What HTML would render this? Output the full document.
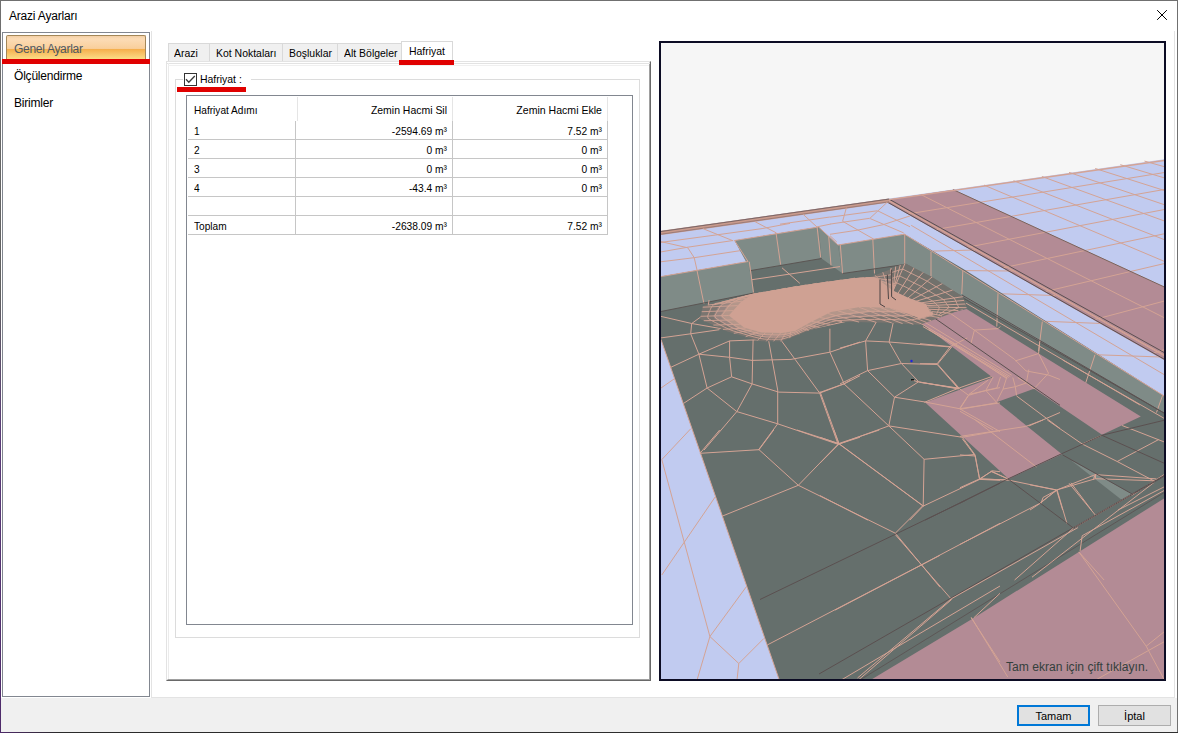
<!DOCTYPE html>
<html><head><meta charset="utf-8">
<style>
*{box-sizing:border-box;margin:0;padding:0}
html,body{width:1178px;height:733px;overflow:hidden;background:#fff;font-family:"Liberation Sans",sans-serif;color:#000}
.a{position:absolute}
.t{position:absolute;white-space:pre;font-size:11px;line-height:13px}
#win{position:absolute;left:0;top:0;width:1178px;height:733px;border:1px solid #707070;background:#fff}
#footer{position:absolute;left:1px;top:698px;width:1176px;height:34px;background:#f0f0f0}
.sx{transform:scaleX(.92);transform-origin:0 0}
.sx5{transform:scaleX(.95);transform-origin:0 0}
.sxr{transform:scaleX(.93);transform-origin:100% 0}
.btn{position:absolute;top:705px;height:21px;width:73px;background:#e1e1e1;border:1px solid #adadad;font-size:11px;text-align:center;line-height:19px}
</style></head><body>
<div id="win"></div>
<div class="a" style="left:0;top:0;width:1px;height:733px;background:linear-gradient(#707070 0%,#606060 40%,#5a3c78 60%,#4e2a6a 100%)"></div>
<div class="a" style="left:0;top:732px;width:1178px;height:1px;background:linear-gradient(90deg,#4e2a6a 0%,#2a2a2a 5%,#303030 100%)"></div>
<!-- title -->
<div class="t" style="left:9px;top:9px;font-size:12px;line-height:15px;letter-spacing:-0.2px">Arazi Ayarları</div>
<svg class="a" style="left:1155px;top:9px" width="13" height="13"><path d="M2.5 1.5L11.5 10.5M11.5 1.5L2.5 10.5" stroke="#000" stroke-width="1" stroke-linecap="square"/></svg>
<!-- container light border -->
<div class="a" style="left:151px;top:31px;width:1024px;height:667px;border-left:1px solid #e3e3e3;border-right:1px solid #e3e3e3;border-bottom:1px solid #e3e3e3"></div>
<!-- left panel -->
<div class="a" style="left:2px;top:32px;width:148px;height:665px;border:1px solid #828790;background:#fff"></div>
<div class="a" style="left:6px;top:35px;width:140px;height:25px;border:1px solid #a48758;border-bottom:none;border-radius:2px 2px 0 0;background:linear-gradient(#f3cfa6 0%,#fcdcb6 12%,#f9cf9b 52%,#f5ad4a 54%,#f8c56a 75%,#fde18c 100%)"></div>
<div class="t" style="left:14px;top:42px;font-size:12px;line-height:15px;color:#4d5762;letter-spacing:-0.3px">Genel Ayarlar</div>
<div class="a" style="left:2px;top:59px;width:148px;height:5px;background:#e00000"></div>
<div class="t" style="left:14px;top:69px;font-size:12px;line-height:15px;letter-spacing:-0.2px">Ölçülendirme</div>
<div class="t" style="left:14px;top:96px;font-size:12px;line-height:15px;letter-spacing:-0.2px">Birimler</div>

<!-- tabs -->
<div class="a" style="left:168px;top:43px;width:42px;height:19px;background:#f0f0f0;border:1px solid #d9d9d9;border-bottom:none"></div>
<div class="a" style="left:209px;top:43px;width:74px;height:19px;background:#f0f0f0;border:1px solid #d9d9d9;border-bottom:none"></div>
<div class="a" style="left:282px;top:43px;width:56px;height:19px;background:#f0f0f0;border:1px solid #d9d9d9;border-bottom:none"></div>
<div class="a" style="left:337px;top:43px;width:65px;height:19px;background:#f0f0f0;border:1px solid #d9d9d9;border-bottom:none"></div>
<!-- tab panel -->
<div class="a" style="left:166px;top:61px;width:485px;height:620px;border-top:1px solid #e3e3e3;border-left:1px solid #e3e3e3;border-right:1px solid #696969;border-bottom:1px solid #696969;background:#fff"></div>
<div class="a" style="left:167px;top:62px;width:483px;height:618px;border-top:1px solid #fff;border-left:1px solid #fff;border-right:1px solid #a0a0a0;border-bottom:1px solid #a0a0a0"></div>
<div class="a" style="left:166px;top:63px;width:484px;height:1px;background:#e3e3e3"></div>
<div class="a" style="left:168px;top:63px;width:1px;height:616px;background:#ebebeb"></div>
<div class="a" style="left:168px;top:65px;width:481px;height:1px;background:#f0f0f0"></div>
<div class="a" style="left:401px;top:41px;width:52px;height:22px;background:#fff;border:1px solid #d9d9d9;border-bottom:none"></div>
<div class="t sx5" style="left:174px;top:47px">Arazi</div>
<div class="t sx5" style="left:216px;top:47px">Kot Noktaları</div>
<div class="t sx5" style="left:289px;top:47px">Boşluklar</div>
<div class="t sx5" style="left:344px;top:47px">Alt Bölgeler</div>
<div class="t sx5" style="left:409px;top:45px">Hafriyat</div>
<div class="a" style="left:399px;top:60px;width:55px;height:5px;background:#e00000"></div>

<!-- group box -->
<div class="a" style="left:175px;top:79px;width:465px;height:559px;border:1px solid #dcdcdc"></div>
<div class="a" style="left:183px;top:72px;width:68px;height:15px;background:#fff"></div>
<div class="a" style="left:184px;top:73px;width:13px;height:13px;border:1px solid #333;background:#fff"></div>
<svg class="a" style="left:184px;top:73px" width="13" height="13"><path d="M2 6.3L4.8 9.2L10.8 3" stroke="#3a3a3a" stroke-width="1.3" fill="none"/></svg>
<div class="t" style="left:200px;top:73px;transform:scaleX(.95);transform-origin:0 0">Hafriyat :</div>
<div class="a" style="left:177px;top:87px;width:69px;height:5px;background:#e00000"></div>

<!-- list view -->
<div class="a" style="left:186px;top:95px;width:447px;height:530px;border:1px solid #828790;background:#fff"></div>

<div class="a" style="left:297px;top:97px;width:1px;height:24px;background:#e5e5e5"></div>
<div class="a" style="left:452px;top:97px;width:1px;height:24px;background:#e5e5e5"></div>
<div class="a" style="left:607px;top:97px;width:1px;height:24px;background:#e5e5e5"></div>
<div class="t sx" style="left:194px;top:104px">Hafriyat Adımı</div>
<div class="t sxr" style="left:347px;width:100px;top:104px;text-align:right;transform:scaleX(.95)">Zemin Hacmi Sil</div>
<div class="t sxr" style="left:502px;width:100px;top:104px;text-align:right;transform:scaleX(.96)">Zemin Hacmi Ekle</div>
<div class="a" style="left:295px;top:121px;width:1px;height:114px;background:#c6c6c6"></div>
<div class="a" style="left:452px;top:121px;width:1px;height:114px;background:#c6c6c6"></div>
<div class="a" style="left:607px;top:121px;width:1px;height:114px;background:#c6c6c6"></div>
<div class="a" style="left:188px;top:139px;width:420px;height:1px;background:#c6c6c6"></div>
<div class="a" style="left:188px;top:158px;width:420px;height:1px;background:#c6c6c6"></div>
<div class="a" style="left:188px;top:177px;width:420px;height:1px;background:#c6c6c6"></div>
<div class="a" style="left:188px;top:196px;width:420px;height:1px;background:#c6c6c6"></div>
<div class="a" style="left:188px;top:215px;width:420px;height:1px;background:#c6c6c6"></div>
<div class="a" style="left:188px;top:234px;width:420px;height:1px;background:#c6c6c6"></div>
<div class="t sx" style="left:194px;top:125px">1</div>
<div class="t sxr" style="left:347px;width:100px;top:125px;text-align:right">-2594.69 m³</div>
<div class="t sxr" style="left:502px;width:100px;top:125px;text-align:right">7.52 m³</div>
<div class="t sx" style="left:194px;top:144px">2</div>
<div class="t sxr" style="left:347px;width:100px;top:144px;text-align:right">0 m³</div>
<div class="t sxr" style="left:502px;width:100px;top:144px;text-align:right">0 m³</div>
<div class="t sx" style="left:194px;top:163px">3</div>
<div class="t sxr" style="left:347px;width:100px;top:163px;text-align:right">0 m³</div>
<div class="t sxr" style="left:502px;width:100px;top:163px;text-align:right">0 m³</div>
<div class="t sx" style="left:194px;top:182px">4</div>
<div class="t sxr" style="left:347px;width:100px;top:182px;text-align:right">-43.4 m³</div>
<div class="t sxr" style="left:502px;width:100px;top:182px;text-align:right">0 m³</div>
<div class="t sx" style="left:194px;top:220px">Toplam</div>
<div class="t sxr" style="left:347px;width:100px;top:220px;text-align:right">-2638.09 m³</div>
<div class="t sxr" style="left:502px;width:100px;top:220px;text-align:right">7.52 m³</div>
<!-- 3D viewport -->
<div class="a" style="left:659px;top:41px;width:507px;height:640px;border:2px solid #0c0c24;background:#f6f6f6;overflow:hidden">
<svg id="v3d" width="503" height="636" viewBox="661 43 503 636" style="display:block">
<polygon points="661,231 1170,158.5 1170,684 661,684" fill="#c1cbf0" />
<polygon points="883.2,200.2 953.2,189.7 2132.6,733.4 2080.2,881.2" fill="#b38b95" />
<g><polyline points="887.3,199.6 2083.8,871.3" fill="none" stroke="#d4a394" stroke-width="1.0" /><polyline points="921.0,194.6 2110.2,796.6" fill="none" stroke="#d4a394" stroke-width="1.0" /><polyline points="953.2,189.7 2132.6,733.4" fill="none" stroke="#d4a394" stroke-width="1.0" /><polyline points="984.0,185.1 2151.8,679.1" fill="none" stroke="#d4a394" stroke-width="1.0" /><polyline points="1013.5,180.7 2168.5,632.1" fill="none" stroke="#d4a394" stroke-width="1.0" /><polyline points="1041.9,176.5 2183.0,591.0" fill="none" stroke="#d4a394" stroke-width="1.0" /><polyline points="1069.1,172.4 2195.9,554.7" fill="none" stroke="#d4a394" stroke-width="1.0" /><polyline points="1095.2,168.5 2207.3,522.4" fill="none" stroke="#d4a394" stroke-width="1.0" /><polyline points="1120.3,164.7 2217.6,493.5" fill="none" stroke="#d4a394" stroke-width="1.0" /><polyline points="1144.5,161.1 2226.8,467.5" fill="none" stroke="#d4a394" stroke-width="1.0" /><polyline points="1167.8,157.6 2235.1,443.9" fill="none" stroke="#d4a394" stroke-width="1.0" /><polyline points="1190.2,154.2 2242.7,422.5" fill="none" stroke="#d4a394" stroke-width="1.0" /><polyline points="1211.9,151.0 2249.6,403.0" fill="none" stroke="#d4a394" stroke-width="1.0" /><polyline points="1232.7,147.8 2256.0,385.1" fill="none" stroke="#d4a394" stroke-width="1.0" /><polyline points="1252.9,144.8 2261.8,368.6" fill="none" stroke="#d4a394" stroke-width="1.0" /><polyline points="1272.4,141.9 2267.2,353.4" fill="none" stroke="#d4a394" stroke-width="1.0" /><polyline points="1291.2,139.1 2272.2,339.3" fill="none" stroke="#d4a394" stroke-width="1.0" /><polyline points="1309.4,136.3 2276.8,326.2" fill="none" stroke="#d4a394" stroke-width="1.0" /><polyline points="1327.0,133.7 2281.1,314.0" fill="none" stroke="#d4a394" stroke-width="1.0" /><polyline points="1344.1,131.1 2285.2,302.6" fill="none" stroke="#d4a394" stroke-width="1.0" /><polyline points="911.2,225.3 2070.2,909.5" fill="none" stroke="#d4a394" stroke-width="1.0" /><polyline points="908.2,213.9 1428.3,129.9" fill="none" stroke="#d4a394" stroke-width="1.0" /><polyline points="935.7,229.6 1467.5,136.3" fill="none" stroke="#d4a394" stroke-width="1.0" /><polyline points="967.1,247.3 1510.1,143.3" fill="none" stroke="#d4a394" stroke-width="1.0" /><polyline points="1003.1,267.8 1556.6,151.0" fill="none" stroke="#d4a394" stroke-width="1.0" /><polyline points="1045.0,291.6 1607.4,159.4" fill="none" stroke="#d4a394" stroke-width="1.0" /><polyline points="1094.4,319.6 1663.4,168.6" fill="none" stroke="#d4a394" stroke-width="1.0" /><polyline points="1153.3,353.0 1725.2,178.8" fill="none" stroke="#d4a394" stroke-width="1.0" /><polyline points="1224.8,393.6 1793.9,190.1" fill="none" stroke="#d4a394" stroke-width="1.0" /><polyline points="1313.6,444.0 1870.7,202.7" fill="none" stroke="#d4a394" stroke-width="1.0" /><polyline points="1426.7,508.2 1957.1,216.9" fill="none" stroke="#d4a394" stroke-width="1.0" /><polyline points="1575.6,592.8 2054.9,233.0" fill="none" stroke="#d4a394" stroke-width="1.0" /><polyline points="1780.6,709.1 2166.8,251.4" fill="none" stroke="#d4a394" stroke-width="1.0" /><polyline points="932.6,251.1 975,250" fill="none" stroke="#d4a394" stroke-width="1.0" /><polyline points="962.7,270.6 1013,271" fill="none" stroke="#d4a394" stroke-width="1.0" /><polyline points="998.2,293.7 1055,295.5" fill="none" stroke="#d4a394" stroke-width="1.0" /><polyline points="1042.5,321.2 1102,323.5" fill="none" stroke="#d4a394" stroke-width="1.0" /><polyline points="1095,354.7 1161,357" fill="none" stroke="#d4a394" stroke-width="1.0" /></g>
<polyline points="886.6,199.7 2083.2,872.9" fill="none" stroke="#d4a394" stroke-width="1.0" />
<polyline points="889.4,199.3 2085.5,866.4" fill="none" stroke="#5b4f50" stroke-width="1.0" />
<polyline points="883.9,200.1 2080.8,879.5" fill="none" stroke="#5b4f50" stroke-width="1.0" />
<polyline points="953.2,189.7 2132.6,733.4" fill="none" stroke="#6a5a5a" stroke-width="0.9" />
<polyline points="889,199.6 1170,159.6" fill="none" stroke="#d4a394" stroke-width="1.4" />
<polyline points="661,232.9 889,200.5" fill="none" stroke="#c99a8c" stroke-width="4.2" />
<polyline points="661,231.5 889,199.1" fill="none" stroke="#7a6666" stroke-width="1.0" />
<polyline points="661,234.2 889,201.8" fill="none" stroke="#8f7372" stroke-width="0.8" />
<g><polyline points="660.0,242.5 715.7,235.0 762.1,228.6 790.0,223.4" fill="none" stroke="#d4a394" stroke-width="1.0" /><polyline points="660.0,252.1 687.8,247.2 733.1,240.5" fill="none" stroke="#d4a394" stroke-width="1.0" /><polyline points="660.0,261.9 694.8,257.6 740.0,250.7" fill="none" stroke="#d4a394" stroke-width="1.0" /><polyline points="660.0,241.4 687.8,247.8 694.2,257.6 697.1,270.4 699.4,280.0" fill="none" stroke="#d4a394" stroke-width="1.0" /><polyline points="702.9,228.6 733.1,240.8" fill="none" stroke="#d4a394" stroke-width="1.0" /><polyline points="755.1,221.7 776.0,232.7 780.6,264.6 790.0,273.9" fill="none" stroke="#d4a394" stroke-width="1.0" /><polyline points="780.0,224.2 829.9,217.0" fill="none" stroke="#d4a394" stroke-width="1.0" /><polyline points="803.2,214.4 817.1,227.1" fill="none" stroke="#d4a394" stroke-width="1.0" /><polyline points="817.2,226.8 830.5,224.1" fill="none" stroke="#d4a394" stroke-width="1.0" /><polyline points="846.4,207.7 842.6,221.3 873.7,239.1" fill="none" stroke="#d4a394" stroke-width="1.0" /><polyline points="830.0,217.2 877.1,210.8" fill="none" stroke="#d4a394" stroke-width="1.0" /><polyline points="887.3,202.2 869.6,218.6" fill="none" stroke="#d4a394" stroke-width="1.0" /><polyline points="830.0,224.1 869.6,218.3" fill="none" stroke="#d4a394" stroke-width="1.0" /><polyline points="877.7,210.8 910.0,226.8" fill="none" stroke="#d4a394" stroke-width="1.0" /><polyline points="870.2,218.6 903.7,232.9" fill="none" stroke="#d4a394" stroke-width="1.0" /><polyline points="830.0,234.3 857.3,230.2 883.2,224.7 910.0,215.9" fill="none" stroke="#d4a394" stroke-width="1.0" /><polyline points="830.0,235.7 836.8,242.0" fill="none" stroke="#d4a394" stroke-width="1.0" /></g>
<polygon points="661,276.6 748,261.5 734.6,240.5 818.6,227 838,245 904.5,234.2 965,270 1170,399.7 1170,684 661,684" fill="#656f6c" />
<polygon points="661,276.6 748,261.5 754,293 661,311.5" fill="#7f8b87" />
<polygon points="734.6,240.5 748,261.5 754,293 751,270.5" fill="#7f8b87" />
<polygon points="734.6,240.5 818.6,227 821.6,258.5 751,270.5" fill="#7f8b87" />
<polygon points="818.6,227 838,245 842.6,273.5 821.6,258.5" fill="#7f8b87" />
<polygon points="838,245 904.5,234.2 904.5,264.5 842.6,273.5" fill="#7f8b87" />
<polygon points="904.5,234.2 1170,399.7 1170,416.5 904.5,262.8" fill="#7f8b87" />
<g><polyline points="661,276.6 748,261.5 734.6,240.5 818.6,227 838,245 904.5,234.2 1170,399.7" fill="none" stroke="#d4a394" stroke-width="1.0" /><polyline points="697.1,271 704,304" fill="none" stroke="#d4a394" stroke-width="1.0" /><polyline points="749.3,261.7 753.5,293" fill="none" stroke="#d4a394" stroke-width="1.0" /><polyline points="776,232.7 780.6,264.6" fill="none" stroke="#d4a394" stroke-width="1.0" /><polyline points="817.1,227.1 820.6,257.3" fill="none" stroke="#d4a394" stroke-width="1.0" /><polyline points="828.7,236.4 831,265.4" fill="none" stroke="#d4a394" stroke-width="1.0" /><polyline points="840.3,244.5 842.6,273.5" fill="none" stroke="#d4a394" stroke-width="1.0" /><polyline points="872.8,238.7 874.5,273.5" fill="none" stroke="#d4a394" stroke-width="1.0" /><polyline points="904.7,234 904.7,265.4" fill="none" stroke="#d4a394" stroke-width="1.0" /><polyline points="931,251.6 931,290" fill="none" stroke="#d4a394" stroke-width="1.0" /><polyline points="962.8,271 961.8,294" fill="none" stroke="#d4a394" stroke-width="1.0" /><polyline points="998,293.3 996.8,326.5" fill="none" stroke="#d4a394" stroke-width="1.0" /><polyline points="1042.3,321.6 1038.6,351" fill="none" stroke="#d4a394" stroke-width="1.0" /><polyline points="1095,354.7 1085,385" fill="none" stroke="#d4a394" stroke-width="1.0" /><polyline points="1162.6,395.3 1156.5,412.5" fill="none" stroke="#d4a394" stroke-width="1.0" /><polyline points="661,311.5 754,293" fill="none" stroke="#5b5553" stroke-width="1.0" /><polyline points="751,270.5 821.6,258.5" fill="none" stroke="#5b5553" stroke-width="1.0" /><polyline points="842.6,273.5 904.5,264.5 1170,416.5" fill="none" stroke="#5b5553" stroke-width="1.0" /></g>
<polygon points="661,339.5 780.7,684 661,684" fill="#c1cbf0" />
<polyline points="661,339.5 780.7,684" fill="none" stroke="#d4a394" stroke-width="1.0" />
<polygon points="864,684 973.7,617.9 1078.8,552 1170,494.7 1170,684" fill="#b38b95" />
<polygon points="918.8,321.5 933,317 966.6,309.1 1140.8,416.6 1102,434.7 1034,388.8 997.2,401.9 1061.9,454.3 1008.7,478.9 925.2,402.4 992.6,377.5" fill="#b38b95" />
<polygon points="1071.3,460.4 1095.3,473.5 1132.4,494.2 1121.5,499.7" fill="#7f8b87" />
<g><polyline points="661.0,316.4 691.7,323.5 721.4,328.7" fill="none" stroke="#d4a394" stroke-width="1.0" /><polyline points="691.7,323.5 690.7,333.8 698.9,354.2 707.1,388.0 736.8,411.6 777.7,423.8 838.1,444.3 860.0,437.2" fill="none" stroke="#d4a394" stroke-width="1.0" /><polyline points="661.0,337.9 690.7,333.8 719.4,329.7" fill="none" stroke="#d4a394" stroke-width="1.0" /><polyline points="670.2,367.6 698.9,354.2 729.6,340.9 755.2,339.9 780.8,339.9 803.3,330.7 860.0,318.4" fill="none" stroke="#d4a394" stroke-width="1.0" /><polyline points="698.9,354.2 729.6,357.3 752.1,360.4 791.0,359.4 829.9,352.2 860.0,342.0" fill="none" stroke="#d4a394" stroke-width="1.0" /><polyline points="729.6,357.3 731.6,376.8 752.1,383.9 778.7,392.1 819.7,393.1 844.2,383.9 860.0,375.7" fill="none" stroke="#d4a394" stroke-width="1.0" /><polyline points="731.6,376.8 707.1,388.0 683.5,403.4" fill="none" stroke="#d4a394" stroke-width="1.0" /><polyline points="753.1,339.9 752.1,383.9 736.8,411.6 704.0,450.1" fill="none" stroke="#d4a394" stroke-width="1.0" /><polyline points="768.5,339.9 777.7,390.1 777.7,423.8 758.3,450.1" fill="none" stroke="#d4a394" stroke-width="1.0" /><polyline points="780.8,339.9 795.1,359.4 819.7,393.1 838.1,444.3" fill="none" stroke="#d4a394" stroke-width="1.0" /><polyline points="829.9,328.7 829.9,352.2 844.2,383.9" fill="none" stroke="#d4a394" stroke-width="1.0" /><polyline points="729.6,340.9 729.6,357.3" fill="none" stroke="#d4a394" stroke-width="1.0" /><polyline points="709.1,300.0 707.1,312.3 691.7,323.5" fill="none" stroke="#d4a394" stroke-width="1.0" /><polyline points="707.1,312.3 721.4,306.1" fill="none" stroke="#d4a394" stroke-width="1.0" /><polyline points="840.0,348.1 865.6,340.9 889.1,342.0 951.6,347.1" fill="none" stroke="#d4a394" stroke-width="1.0" /><polyline points="865.6,340.9 878.9,317.4" fill="none" stroke="#d4a394" stroke-width="1.0" /><polyline points="889.1,342.0 893.2,322.5 895.3,316.4" fill="none" stroke="#d4a394" stroke-width="1.0" /><polyline points="889.1,342.0 901.4,363.5 918.8,381.9 958.7,389.0" fill="none" stroke="#d4a394" stroke-width="1.0" /><polyline points="840.0,383.9 867.6,370.6 901.4,363.5 937.2,364.5 951.6,347.1" fill="none" stroke="#d4a394" stroke-width="1.0" /><polyline points="865.6,340.9 867.6,370.6" fill="none" stroke="#d4a394" stroke-width="1.0" /><polyline points="937.2,364.5 958.7,389.0" fill="none" stroke="#d4a394" stroke-width="1.0" /><polyline points="752,279.7 840,266.6" fill="none" stroke="#d4a394" stroke-width="1.0" /><polyline points="782,267.8 799.8,283.3" fill="none" stroke="#d4a394" stroke-width="1.0" /><polyline points="920.0,319.3 1011.7,375.2" fill="none" stroke="#d4a394" stroke-width="1.0" /><polyline points="920.0,322.9 1010.3,376.6" fill="none" stroke="#d4a394" stroke-width="1.0" /><polyline points="922.9,326.5 1008.8,377.4" fill="none" stroke="#d4a394" stroke-width="1.0" /><polyline points="928.6,329.4 1007.4,378.1" fill="none" stroke="#d4a394" stroke-width="1.0" /><polyline points="938.6,333.7 1006.0,378.1" fill="none" stroke="#d4a394" stroke-width="1.0" /><polyline points="948.7,312.2 974.4,330.1 1014.6,359.4 1026.0,370.9 1049.0,375.2 1060.0,379.5" fill="none" stroke="#d4a394" stroke-width="1.0" /><polyline points="974.4,330.1 970.9,343.7" fill="none" stroke="#d4a394" stroke-width="1.0" /><polyline points="974.4,330.1 998.1,328.6 1000.2,326.5" fill="none" stroke="#d4a394" stroke-width="1.0" /><polyline points="920.0,343.7 950.1,346.6 937.2,363.7 920.0,363.7" fill="none" stroke="#d4a394" stroke-width="1.0" /><polyline points="937.2,363.7 958.7,388.1 991.6,376.6" fill="none" stroke="#d4a394" stroke-width="1.0" /><polyline points="920.0,382.4 958.7,388.1 924.3,402.4" fill="none" stroke="#d4a394" stroke-width="1.0" /><polyline points="950.1,346.6 967.3,338.0" fill="none" stroke="#d4a394" stroke-width="1.0" /><polyline points="1015.3,360.9 1038.6,353.5 1039.9,340" fill="none" stroke="#d4a394" stroke-width="1.0" /><polyline points="1038.6,353.5 1048.5,373.2 1033.7,389.1" fill="none" stroke="#d4a394" stroke-width="1.0" /><polyline points="1028.8,369.5 1026.3,383" fill="none" stroke="#d4a394" stroke-width="1.0" /><polyline points="993.2,376.9 985.8,390.4 968.6,395.3 960,389.1" fill="none" stroke="#d4a394" stroke-width="1.0" /><polyline points="1000.5,376.9 996.9,387.9 985.8,390.4" fill="none" stroke="#d4a394" stroke-width="1.0" /><polyline points="1006.7,377.5 1003,389.1 996.9,401.3" fill="none" stroke="#d4a394" stroke-width="1.0" /><polyline points="1012.8,377.5 1015.3,386.7 1016.5,395.3" fill="none" stroke="#d4a394" stroke-width="1.0" /><polyline points="1017.7,377.5 1026.3,383 1033.7,388.5" fill="none" stroke="#d4a394" stroke-width="1.0" /><polyline points="968.6,395.3 960,408.8" fill="none" stroke="#d4a394" stroke-width="1.0" /><polyline points="985.8,390.4 996.9,402.7 960,409.4" fill="none" stroke="#d4a394" stroke-width="1.0" /><polyline points="960,411.3 993.2,430" fill="none" stroke="#d4a394" stroke-width="1.0" /><polyline points="1016.5,395.9 1060,428.5" fill="none" stroke="#d4a394" stroke-width="1.0" /><polyline points="1028.8,426 1060,412.5" fill="none" stroke="#d4a394" stroke-width="1.0" /><polyline points="1003,389.1 1015.3,386.7 1026.3,383" fill="none" stroke="#d4a394" stroke-width="1.0" /><polyline points="934.3,317.9 1060.0,405.3" fill="none" stroke="#5b5050" stroke-width="1.0" /><polyline points="966.1,303.2 1140,405" fill="none" stroke="#d4a394" stroke-width="1.0" /><polyline points="962,295 1170,416.5" fill="none" stroke="#5b5050" stroke-width="1.0" /><polyline points="700.0,453.3 759.0,449.7 773.7,430.0" fill="none" stroke="#d4a394" stroke-width="1.0" /><polyline points="759.0,449.7 798.3,485.3 838.8,443.5 833.9,430.0" fill="none" stroke="#d4a394" stroke-width="1.0" /><polyline points="838.8,443.5 797.0,430.0" fill="none" stroke="#d4a394" stroke-width="1.0" /><polyline points="838.8,443.5 879.3,430.0" fill="none" stroke="#d4a394" stroke-width="1.0" /><polyline points="838.8,443.5 923.5,506.1" fill="none" stroke="#d4a394" stroke-width="1.0" /><polyline points="722.6,516.0 798.3,485.3 895.3,533.2 923.3,505.2" fill="none" stroke="#d4a394" stroke-width="1.0" /><polyline points="895.3,533.2 940.0,587.2" fill="none" stroke="#d4a394" stroke-width="1.0" /><polyline points="835.1,610.1 940.0,555.3" fill="none" stroke="#d4a394" stroke-width="1.0" /><polyline points="700.0,453.3 719.7,430.0" fill="none" stroke="#d4a394" stroke-width="1.0" /><polyline points="820.0,392.4 843.9,383.8 850.6,380.0" fill="none" stroke="#d4a394" stroke-width="1.0" /><polyline points="843.9,383.8 888.8,425.9 924.1,459.3 923.2,506.1 909.8,520.1" fill="none" stroke="#d4a394" stroke-width="1.0" /><polyline points="820.0,391.5 839.1,444.0 820.0,463.1" fill="none" stroke="#d4a394" stroke-width="1.0" /><polyline points="820.0,437.3 839.1,444.0 888.8,425.9" fill="none" stroke="#d4a394" stroke-width="1.0" /><polyline points="839.1,444.0 923.2,506.1" fill="none" stroke="#d4a394" stroke-width="1.0" /><polyline points="820.0,495.6 867.8,520.1" fill="none" stroke="#d4a394" stroke-width="1.0" /><polyline points="888.8,425.9 894.5,397.2" fill="none" stroke="#d4a394" stroke-width="1.0" /><polyline points="894.5,397.2 918.4,381.9 911.7,380.0" fill="none" stroke="#d4a394" stroke-width="1.0" /><polyline points="918.4,381.9 959.5,388.6" fill="none" stroke="#d4a394" stroke-width="1.0" /><polyline points="894.5,397.2 925.1,402.0" fill="none" stroke="#d4a394" stroke-width="1.0" /><polyline points="888.8,425.9 962.4,437.3" fill="none" stroke="#d4a394" stroke-width="1.0" /><polyline points="924.1,459.3 974.8,454.5 979.6,479.4 923.2,506.1" fill="none" stroke="#d4a394" stroke-width="1.0" /><polyline points="974.8,454.5 962.4,437.3" fill="none" stroke="#d4a394" stroke-width="1.0" /><polyline points="979.6,479.4 992.0,470.8 1000.0,471.7" fill="none" stroke="#d4a394" stroke-width="1.0" /><polyline points="979.6,479.4 1000.0,480.3" fill="none" stroke="#d4a394" stroke-width="1.0" /><polyline points="951.9,380.0 959.5,388.6" fill="none" stroke="#d4a394" stroke-width="1.0" /><polyline points="925.1,402.0 959.5,408.7 1000.0,402.9" fill="none" stroke="#d4a394" stroke-width="1.0" /><polyline points="959.5,408.7 969.1,394.3 988.2,380.0" fill="none" stroke="#d4a394" stroke-width="1.0" /><polyline points="969.1,394.3 1000.0,387.6" fill="none" stroke="#d4a394" stroke-width="1.0" /><polyline points="959.5,408.7 1000.0,431.6" fill="none" stroke="#d4a394" stroke-width="1.0" /><polyline points="962.4,437.3 1000.0,430.6" fill="none" stroke="#d4a394" stroke-width="1.0" /><polyline points="925.1,520.1 1000.0,483.2" fill="none" stroke="#5b5050" stroke-width="1.0" /><polyline points="1122.1,425.5 1164.1,441.9" fill="none" stroke="#d4a394" stroke-width="1.0" /><polyline points="1030.0,484.8 1056.6,490.0 1095.5,478.7 1154.8,480.8" fill="none" stroke="#d4a394" stroke-width="1.0" /><polyline points="1056.6,490.0 1062.7,510.0" fill="none" stroke="#d4a394" stroke-width="1.0" /><polyline points="1056.6,490.0 1040.2,503.3 1030.0,510.0" fill="none" stroke="#d4a394" stroke-width="1.0" /><polyline points="1070.9,482.8 1091.4,510.0" fill="none" stroke="#d4a394" stroke-width="1.0" /><polyline points="1095.5,473.6 1095.5,478.7" fill="none" stroke="#d4a394" stroke-width="1.0" /><polyline points="1132.3,495.1 1164.1,474.6" fill="none" stroke="#d4a394" stroke-width="1.0" /><polyline points="1118.0,510.0 1164.1,486.9" fill="none" stroke="#d4a394" stroke-width="1.0" /><polyline points="1062.7,360.0 1164.1,418.3" fill="none" stroke="#d4a394" stroke-width="1.0" /><polyline points="860,680 1165,492" fill="none" stroke="#5b5050" stroke-width="0.8" /><polyline points="895.1,534.4 951.6,599.5" fill="none" stroke="#d4a394" stroke-width="1.0" /><polyline points="767.4,644.9 920.9,565.1 1000.0,523.3" fill="none" stroke="#d4a394" stroke-width="1.0" /><polyline points="841.1,680.1 1000.0,586.0" fill="none" stroke="#d4a394" stroke-width="1.0" /><polyline points="858.3,680.1 951.6,599.5" fill="none" stroke="#d4a394" stroke-width="1.0" /><polyline points="973.7,617.9 1000.0,593.3" fill="none" stroke="#d4a394" stroke-width="1.0" /><polyline points="971.3,617.9 1000.0,662.1" fill="none" stroke="#d4a394" stroke-width="1.0" /><polyline points="760.0,599.5 895.1,534.4 966.3,500.0" fill="none" stroke="#5b5050" stroke-width="1.0" /><polyline points="819,674 1165,475" fill="none" stroke="#5b5050" stroke-width="1.0" /><polyline points="857.5,678 951.3,598.8 1077.9,527.6" fill="none" stroke="#d4a394" stroke-width="1.0" /><polyline points="960.0,544.4 1038.6,504.0 1057.1,489.9 1095.3,474.6 1156.5,478.9" fill="none" stroke="#d4a394" stroke-width="1.0" /><polyline points="1057.1,489.9 1043.0,497.5 1040.8,504.0" fill="none" stroke="#d4a394" stroke-width="1.0" /><polyline points="1057.1,489.9 1067.0,523.7" fill="none" stroke="#d4a394" stroke-width="1.0" /><polyline points="1069.1,483.3 1095.3,515.0" fill="none" stroke="#d4a394" stroke-width="1.0" /><polyline points="1095.3,474.6 1093.2,480.0" fill="none" stroke="#d4a394" stroke-width="1.0" /><polyline points="1014.6,580.0 1073.5,528.1 1134.6,493.1" fill="none" stroke="#d4a394" stroke-width="1.0" /><polyline points="1032.0,577.2 1154.3,482.2" fill="none" stroke="#d4a394" stroke-width="1.0" /><polyline points="1080.1,551.0 1082.2,535.7 1165.2,489.9" fill="none" stroke="#d4a394" stroke-width="1.0" /><polyline points="1079.0,552.1 1104.1,580.0" fill="none" stroke="#d4a394" stroke-width="1.0" /><polyline points="962.2,438.6 975.3,456.0 979.6,478.9" fill="none" stroke="#d4a394" stroke-width="1.0" /><polyline points="960.0,454.9 975.3,456.0" fill="none" stroke="#d4a394" stroke-width="1.0" /><polyline points="960.0,487.7 979.6,478.9 1008.0,480.0" fill="none" stroke="#d4a394" stroke-width="1.0" /><polyline points="979.6,478.9 991.7,471.3 1008.0,478.9" fill="none" stroke="#d4a394" stroke-width="1.0" /><polyline points="960.0,436.4 1025.5,426.5 1043.0,420.0" fill="none" stroke="#d4a394" stroke-width="1.0" /><polyline points="975.3,420.0 1036.4,466.9" fill="none" stroke="#d4a394" stroke-width="1.0" /><polyline points="979.6,478.9 1008.0,480.0 1056.0,489.9" fill="none" stroke="#d4a394" stroke-width="1.0" /><polyline points="990.6,471.3 1008.0,478.9" fill="none" stroke="#d4a394" stroke-width="1.0" /><polyline points="1047.3,420.0 1082.2,444.0 1117.2,461.5 1154.3,481.1" fill="none" stroke="#d4a394" stroke-width="1.0" /><polyline points="1082.2,444.0 1101.9,435.3" fill="none" stroke="#d4a394" stroke-width="1.0" /><polyline points="1117.2,461.5 1158.6,439.6" fill="none" stroke="#d4a394" stroke-width="1.0" /><polyline points="960.0,503.0 1008.0,478.9 1061.5,453.8 1101.9,435.3 1165.2,420.0" fill="none" stroke="#5b5050" stroke-width="1.0" /><polyline points="1008.0,478.9 1073.5,528.1" fill="none" stroke="#5b5050" stroke-width="1.0" /><polyline points="1073.5,528.1 1165.2,475.7" fill="none" stroke="#5b5050" stroke-width="1.0" /><polyline points="1101.9,435.3 1165.2,463.7" fill="none" stroke="#5b5050" stroke-width="1.0" /><polyline points="1062.6,454.9 1132.5,494.2" fill="none" stroke="#5b5050" stroke-width="1.0" /><polyline points="971.2,617.3 1007.7,676.9" fill="none" stroke="#d4a394" stroke-width="1.0" /><polyline points="1078.8,551.9 1146.2,646.2 1165.4,681.9" fill="none" stroke="#d4a394" stroke-width="1.0" /><polyline points="1146.2,646.2 1165.4,630.8 1170.0,626.9" fill="none" stroke="#d4a394" stroke-width="1.0" /><polyline points="1092.3,681.9 1170.0,638.5" fill="none" stroke="#d4a394" stroke-width="1.0" /><polyline points="661,388 674.3,378.8" fill="none" stroke="#d4a394" stroke-width="1.0" /><polyline points="867.6,370.6 894.5,397.2" fill="none" stroke="#d4a394" stroke-width="1.0" /><polyline points="661.8,459.6 690.7,428.8" fill="none" stroke="#d4a394" stroke-width="1.0" /><polyline points="746.5,586.5 709.9,636.5" fill="none" stroke="#d4a394" stroke-width="1.0" /><polyline points="661.8,459.6 709.9,636.5 738.8,663.5 736.8,681.9" fill="none" stroke="#d4a394" stroke-width="1.0" /><polyline points="661.8,575.0 715.7,496.2" fill="none" stroke="#d4a394" stroke-width="1.0" /><polyline points="738.8,663.5 763.8,638.5" fill="none" stroke="#d4a394" stroke-width="1.0" /><polyline points="696.5,681.9 709.9,636.5" fill="none" stroke="#d4a394" stroke-width="1.0" /></g>
<polygon points="700,319 703,306 722,302 744,297 765,293.5 800,288 840,281.5 870,277 892.8,268.4 905,263.5 932,277 962.8,296.7 966.5,307.7 933.3,320 919.8,324.7 889,322.7 840,321.7 809,330.4 781.9,341.3 761.4,341.3 727.3,331.4" fill="#7a7570" />
<polygon points="713.3,315.9 714.6,313.6 715.9,311.2 717.2,308.8 718.5,306.5 720.5,304.5 723.3,303.3 726.1,302.2 728.8,301.2 731.6,300.1 734.4,299.1 737.4,298.0 740.6,297.3 743.8,296.7 747.0,296.0 750.2,295.4 753.4,294.7 757.4,294.0 761.9,293.2 766.4,292.5 770.9,291.7 775.4,290.9 780.3,290.1 785.9,289.2 791.5,288.3 797.2,287.5 802.8,286.6 808.4,285.7 814.9,284.8 821.8,283.7 828.8,282.7 835.7,281.7 842.6,280.7 849.0,279.8 853.4,279.4 857.7,279.0 862.0,278.6 866.2,278.3 870.5,277.9 874.6,278.2 878.1,278.4 881.6,278.6 885.1,278.8 888.6,279.0 892.2,279.0 895.2,278.9 897.7,279.1 900.2,279.2 902.7,279.4 905.1,279.5 907.7,279.5 911.4,280.9 915.4,282.7 919.5,284.5 923.5,286.4 927.0,288.3 930.1,290.4 933.4,293.2 936.8,295.9 940.2,298.6 943.5,301.3 945.6,303.6 946.7,305.6 946.2,307.1 945.6,308.5 945.1,310.0 944.3,310.9 943.3,311.4 940.1,311.9 935.6,312.5 931.1,313.0 926.6,313.6 922.2,314.5 917.8,315.4 915.1,315.6 912.6,315.7 910.1,315.9 906.8,316.2 903.1,316.6 899.1,316.9 893.7,316.6 888.3,316.4 883.0,316.2 877.6,316.4 872.3,316.6 866.0,316.9 858.9,317.2 851.8,317.5 845.1,318.2 838.6,319.0 832.1,319.8 826.9,321.4 822.1,323.1 817.5,324.8 813.4,326.3 809.2,327.8 805.1,329.3 801.3,331.0 797.5,332.7 793.8,334.0 790.2,335.2 786.5,336.4 783.0,337.3 779.9,337.5 776.7,337.6 773.0,337.5 769.4,337.5 765.7,337.4 761.2,336.8 756.3,335.8 751.5,334.5 746.8,333.1 742.1,331.7 737.3,330.4 733.2,328.8 729.2,326.9 725.3,324.7 721.5,322.5 717.6,320.4 714.3,318.2" fill="#978580" />
<polygon points="720.3,315.7 722.1,313.3 723.8,310.9 725.5,308.5 727.2,306.1 729.3,303.9 731.8,302.3 734.3,301.1 736.7,299.9 739.2,298.6 741.7,297.4 744.3,296.2 747.1,295.6 750.0,295.1 752.8,294.5 755.7,294.0 758.5,293.5 762.7,292.7 767.6,291.8 772.6,291.0 777.5,290.1 782.5,289.2 787.6,288.3 793.0,287.5 798.3,286.7 803.6,285.9 809.0,285.1 814.3,284.3 820.8,283.3 827.6,282.4 834.5,281.4 841.4,280.5 848.2,279.5 854.4,278.8 858.2,278.6 861.9,278.5 865.6,278.3 869.4,278.2 873.1,278.0 876.7,279.0 879.9,280.2 883.2,281.3 886.4,282.4 889.7,283.5 892.9,284.4 895.9,285.0 898.6,285.7 901.3,286.4 904.0,287.1 906.7,287.8 909.5,288.4 913.0,289.6 916.6,291.1 920.2,292.6 923.8,294.1 926.7,295.8 928.8,297.8 931.1,300.1 933.3,302.4 935.5,304.7 937.8,307.0 938.0,308.7 937.7,310.2 936.5,311.4 935.2,312.6 934.0,313.8 932.4,314.2 930.6,313.8 927.5,313.5 923.7,313.2 920.0,312.9 916.2,312.6 912.5,312.8 908.9,312.9 906.2,312.7 903.6,312.5 901.0,312.3 897.2,312.3 892.8,312.5 888.1,312.5 882.8,312.3 877.4,312.2 872.1,312.1 866.8,312.6 861.4,313.2 855.6,313.7 849.3,314.3 843.0,314.9 837.4,316.1 832.0,317.4 826.6,318.8 822.0,320.5 817.5,322.4 813.4,324.2 809.9,325.6 806.5,327.1 803.1,328.6 799.8,330.2 796.6,331.8 793.5,332.8 790.4,333.6 787.3,334.4 784.3,335.1 781.5,335.3 778.4,335.5 774.7,335.4 771.0,335.3 767.3,335.3 763.2,334.9 758.8,334.3 754.7,333.2 750.7,332.0 746.7,330.9 742.6,329.7 738.9,328.4 735.4,326.7 732.0,324.5 728.6,322.3 725.2,320.2 722.1,318.0" fill="#b4968a" />
<g><polyline points="728.8,315.5 700.6,316.3" fill="none" stroke="#cfa193" stroke-width="0.9" /><polyline points="733.2,310.6 701.7,311.7" fill="none" stroke="#cfa193" stroke-width="0.9" /><polyline points="737.7,305.6 702.7,307.2" fill="none" stroke="#cfa193" stroke-width="0.9" /><polyline points="742.0,301.2 707.9,305.0" fill="none" stroke="#cfa193" stroke-width="0.9" /><polyline points="746.2,298.3 714.6,303.6" fill="none" stroke="#cfa193" stroke-width="0.9" /><polyline points="750.4,295.3 721.2,302.2" fill="none" stroke="#cfa193" stroke-width="0.9" /><polyline points="754.9,293.6 728.8,300.4" fill="none" stroke="#cfa193" stroke-width="0.9" /><polyline points="759.8,292.8 736.5,298.7" fill="none" stroke="#cfa193" stroke-width="0.9" /><polyline points="764.6,291.9 744.2,297.0" fill="none" stroke="#cfa193" stroke-width="0.9" /><polyline points="774.5,290.2 751.6,295.7" fill="none" stroke="#cfa193" stroke-width="0.9" /><polyline points="785.5,288.2 758.9,294.5" fill="none" stroke="#cfa193" stroke-width="0.9" /><polyline points="796.4,286.3 767.1,293.2" fill="none" stroke="#cfa193" stroke-width="0.9" /><polyline points="806.4,284.8 779.4,291.2" fill="none" stroke="#cfa193" stroke-width="0.9" /><polyline points="816.4,283.3 791.6,289.3" fill="none" stroke="#cfa193" stroke-width="0.9" /><polyline points="827.8,281.7 804.4,287.3" fill="none" stroke="#cfa193" stroke-width="0.9" /><polyline points="841.4,279.9 818.4,285.0" fill="none" stroke="#cfa193" stroke-width="0.9" /><polyline points="855.0,278.1 832.4,282.7" fill="none" stroke="#cfa193" stroke-width="0.9" /><polyline points="863.9,277.7 844.8,280.8" fill="none" stroke="#cfa193" stroke-width="0.9" /><polyline points="870.1,277.9 855.3,279.2" fill="none" stroke="#cfa193" stroke-width="0.9" /><polyline points="876.2,278.2 865.8,277.6" fill="none" stroke="#cfa193" stroke-width="0.9" /><polyline points="882.1,282.3 874.8,275.2" fill="none" stroke="#cfa193" stroke-width="0.9" /><polyline points="888.0,286.8 882.8,272.2" fill="none" stroke="#cfa193" stroke-width="0.9" /><polyline points="893.9,291.0 890.7,269.2" fill="none" stroke="#cfa193" stroke-width="0.9" /><polyline points="899.7,293.7 896.0,267.1" fill="none" stroke="#cfa193" stroke-width="0.9" /><polyline points="905.6,296.4 900.2,265.4" fill="none" stroke="#cfa193" stroke-width="0.9" /><polyline points="911.7,298.9 904.5,263.7" fill="none" stroke="#cfa193" stroke-width="0.9" /><polyline points="918.0,301.2 913.4,267.7" fill="none" stroke="#cfa193" stroke-width="0.9" /><polyline points="924.3,303.4 922.8,272.4" fill="none" stroke="#cfa193" stroke-width="0.9" /><polyline points="927.3,306.6 932.3,277.2" fill="none" stroke="#cfa193" stroke-width="0.9" /><polyline points="929.1,310.3 943.1,284.1" fill="none" stroke="#cfa193" stroke-width="0.9" /><polyline points="930.9,313.9 953.9,291.0" fill="none" stroke="#cfa193" stroke-width="0.9" /><polyline points="926.8,315.7 963.0,297.4" fill="none" stroke="#cfa193" stroke-width="0.9" /><polyline points="922.8,317.5 964.3,301.2" fill="none" stroke="#cfa193" stroke-width="0.9" /><polyline points="918.2,318.1 965.6,305.1" fill="none" stroke="#cfa193" stroke-width="0.9" /><polyline points="912.4,315.3 962.8,309.1" fill="none" stroke="#cfa193" stroke-width="0.9" /><polyline points="906.5,312.6 951.2,313.4" fill="none" stroke="#cfa193" stroke-width="0.9" /><polyline points="900.9,310.7 939.6,317.7" fill="none" stroke="#cfa193" stroke-width="0.9" /><polyline points="895.5,309.3 931.1,320.8" fill="none" stroke="#cfa193" stroke-width="0.9" /><polyline points="890.1,307.9 926.4,322.4" fill="none" stroke="#cfa193" stroke-width="0.9" /><polyline points="880.4,307.5 921.7,324.0" fill="none" stroke="#cfa193" stroke-width="0.9" /><polyline points="869.7,307.2 913.3,324.3" fill="none" stroke="#cfa193" stroke-width="0.9" /><polyline points="859.0,307.2 902.6,323.6" fill="none" stroke="#cfa193" stroke-width="0.9" /><polyline points="848.4,309.0 891.8,322.9" fill="none" stroke="#cfa193" stroke-width="0.9" /><polyline points="837.8,310.8 876.3,322.4" fill="none" stroke="#cfa193" stroke-width="0.9" /><polyline points="828.1,313.5 859.1,322.1" fill="none" stroke="#cfa193" stroke-width="0.9" /><polyline points="820.0,317.5 842.0,321.7" fill="none" stroke="#cfa193" stroke-width="0.9" /><polyline points="812.0,321.5 830.4,324.4" fill="none" stroke="#cfa193" stroke-width="0.9" /><polyline points="805.8,324.9 819.5,327.4" fill="none" stroke="#cfa193" stroke-width="0.9" /><polyline points="800.6,327.8 808.7,330.5" fill="none" stroke="#cfa193" stroke-width="0.9" /><polyline points="795.5,330.7 799.2,334.3" fill="none" stroke="#cfa193" stroke-width="0.9" /><polyline points="790.6,331.7 789.8,338.1" fill="none" stroke="#cfa193" stroke-width="0.9" /><polyline points="785.8,332.4 780.7,341.3" fill="none" stroke="#cfa193" stroke-width="0.9" /><polyline points="780.5,333.0 773.5,341.3" fill="none" stroke="#cfa193" stroke-width="0.9" /><polyline points="773.1,332.8 766.3,341.3" fill="none" stroke="#cfa193" stroke-width="0.9" /><polyline points="765.6,332.6 757.6,340.2" fill="none" stroke="#cfa193" stroke-width="0.9" /><polyline points="758.6,331.7 745.7,336.7" fill="none" stroke="#cfa193" stroke-width="0.9" /><polyline points="752.2,329.8 733.8,333.3" fill="none" stroke="#cfa193" stroke-width="0.9" /><polyline points="745.8,328.0 722.9,329.4" fill="none" stroke="#cfa193" stroke-width="0.9" /><polyline points="739.9,324.3 713.4,325.1" fill="none" stroke="#cfa193" stroke-width="0.9" /><polyline points="734.4,319.9 703.8,320.7" fill="none" stroke="#cfa193" stroke-width="0.9" /><polygon points="721.8,315.7 723.6,313.3 725.3,310.8 727.1,308.4 728.9,306.0 731.1,303.8 733.5,302.1 735.9,300.9 738.3,299.6 740.7,298.3 743.1,297.0 745.6,295.8 748.4,295.3 751.2,294.8 754.0,294.2 756.7,293.7 759.5,293.2 763.7,292.5 768.8,291.6 773.8,290.7 778.9,289.8 783.9,288.9 789.1,288.0 794.4,287.2 799.7,286.4 804.9,285.6 810.2,284.8 815.5,284.0 821.9,283.1 828.8,282.1 835.6,281.2 842.5,280.2 849.4,279.3 855.5,278.6 859.1,278.4 862.8,278.3 866.4,278.2 870.0,278.1 873.6,278.0 877.1,279.2 880.3,280.5 883.5,281.8 886.7,283.2 889.9,284.5 893.1,285.5 896.1,286.3 898.8,287.1 901.5,287.9 904.3,288.7 907.0,289.5 909.9,290.1 913.3,291.4 916.8,292.8 920.4,294.2 923.9,295.6 926.7,297.3 928.6,299.3 930.6,301.5 932.6,303.7 934.6,305.9 936.6,308.2 936.5,309.7 935.9,311.1 934.5,312.3 933.1,313.4 931.8,314.6 930.1,314.8 928.0,314.3 925.0,313.8 921.4,313.3 917.7,312.8 914.1,312.4 910.6,312.4 907.1,312.4 904.4,312.2 901.8,311.9 899.2,311.6 895.3,311.5 890.7,311.6 886.0,311.7 880.6,311.5 875.3,311.3 869.9,311.3 864.6,311.9 859.2,312.5 853.5,313.1 847.4,313.7 841.3,314.4 835.8,315.6 830.7,317.1 825.5,318.6 821.0,320.4 816.6,322.2 812.5,324.0 809.2,325.5 805.9,327.0 802.7,328.5 799.5,330.1 796.4,331.6 793.4,332.5 790.4,333.3 787.4,334.0 784.5,334.6 781.8,334.9 778.8,335.0 775.1,335.0 771.4,334.9 767.7,334.8 763.6,334.5 759.3,334.0 755.4,332.9 751.5,331.8 747.6,330.7 743.7,329.6 740.0,328.4 736.6,326.7 733.3,324.5 730.0,322.3 726.7,320.1 723.7,317.9" fill="none" stroke="#cfa193" stroke-width="0.9"/><polygon points="714.7,315.9 716.1,313.5 717.5,311.1 718.8,308.8 720.2,306.4 722.3,304.4 725.0,303.1 727.7,302.0 730.4,300.9 733.1,299.8 735.8,298.7 738.7,297.6 741.9,297.0 745.0,296.4 748.1,295.7 751.3,295.1 754.4,294.5 758.4,293.8 763.0,293.0 767.6,292.2 772.2,291.4 776.8,290.6 781.8,289.7 787.3,288.9 792.9,288.0 798.5,287.1 804.0,286.3 809.6,285.4 816.1,284.5 823.0,283.5 829.9,282.5 836.8,281.4 843.7,280.4 850.1,279.6 854.4,279.2 858.5,278.9 862.7,278.6 866.9,278.2 871.0,277.9 875.0,278.4 878.5,278.7 881.9,279.1 885.4,279.5 888.8,279.9 892.3,280.1 895.3,280.2 897.9,280.4 900.4,280.7 902.9,280.9 905.5,281.2 908.1,281.3 911.7,282.7 915.7,284.4 919.6,286.2 923.5,287.9 927.0,289.8 929.8,291.9 933.0,294.5 936.1,297.2 939.2,299.8 942.4,302.4 944.1,304.6 944.9,306.5 944.2,307.9 943.5,309.4 942.8,310.8 941.9,311.6 940.8,311.8 937.6,312.2 933.3,312.6 928.9,313.0 924.5,313.4 920.3,314.2 916.0,314.9 913.3,315.0 910.8,315.1 908.3,315.2 904.9,315.4 901.0,315.8 896.9,316.0 891.5,315.8 886.2,315.5 880.8,315.4 875.4,315.7 870.1,315.9 864.0,316.3 857.0,316.6 850.1,317.0 843.6,317.8 837.3,318.7 831.0,319.6 825.9,321.2 821.2,323.0 816.7,324.7 812.7,326.2 808.7,327.6 804.7,329.2 801.0,330.8 797.4,332.5 793.8,333.8 790.2,334.9 786.6,336.0 783.2,336.9 780.3,337.0 777.0,337.1 773.4,337.1 769.7,337.0 766.0,337.0 761.6,336.4 756.8,335.5 752.1,334.2 747.6,332.9 743.0,331.6 738.4,330.2 734.3,328.7 730.4,326.9 726.7,324.7 722.9,322.5 719.1,320.3 715.8,318.1" fill="none" stroke="#cfa193" stroke-width="0.9"/><polygon points="707.7,316.1 708.6,313.8 709.6,311.4 710.5,309.1 711.5,306.8 713.4,305.0 716.5,304.0 719.5,303.1 722.5,302.2 725.5,301.3 728.5,300.5 731.9,299.5 735.4,298.7 738.8,298.0 742.3,297.2 745.8,296.5 749.3,295.7 753.2,295.1 757.3,294.4 761.4,293.6 765.6,292.9 769.7,292.2 774.4,291.4 780.3,290.5 786.1,289.6 792.0,288.7 797.8,287.8 803.7,286.9 810.2,285.9 817.2,284.8 824.1,283.7 831.1,282.7 838.1,281.6 844.8,280.6 849.6,280.0 854.3,279.4 859.0,278.9 863.7,278.3 868.4,277.8 872.9,277.5 876.6,277.0 880.4,276.4 884.1,275.8 887.8,275.3 891.5,274.6 894.6,274.1 896.9,273.8 899.2,273.5 901.6,273.2 903.9,272.9 906.3,272.5 910.2,274.0 914.5,276.1 918.9,278.1 923.2,280.2 927.3,282.3 931.1,284.6 935.3,287.6 939.6,290.6 943.9,293.7 948.1,296.7 951.7,299.5 954.0,301.9 954.0,303.6 953.9,305.3 953.9,306.9 953.8,308.3 953.5,309.4 950.2,310.6 945.1,311.9 940.1,313.2 935.0,314.5 929.9,315.9 924.9,317.4 922.2,317.9 919.8,318.3 917.3,318.8 914.5,319.3 911.4,319.9 907.8,320.3 902.4,320.0 897.0,319.7 891.7,319.5 886.3,319.4 880.9,319.4 874.4,319.4 866.6,319.5 858.9,319.6 851.4,319.9 843.9,320.3 836.5,320.7 830.9,322.0 825.8,323.7 820.8,325.3 816.1,326.8 811.4,328.3 806.7,329.8 802.5,331.6 798.3,333.4 794.1,335.0 790.0,336.5 785.8,338.0 782.0,339.1 778.7,339.2 775.3,339.2 771.6,339.2 768.0,339.2 764.4,339.1 759.6,338.3 754.2,337.0 748.9,335.5 743.7,333.9 738.4,332.4 733.1,330.9 728.6,329.1 724.3,327.1 720.0,324.9 715.7,322.7 711.5,320.5 708.0,318.3" fill="none" stroke="#cfa193" stroke-width="0.9"/></g>
<polygon points="891,268 905,263.5 932,277 962.8,296.7 966.5,307.7 942,316 934,314 928,307 920,303 908,298 893,291 893,291" fill="#72716c" />
<g><polyline points="893.0,291.0 891.0,268.0" fill="none" stroke="#cfa193" stroke-width="1.0" /><polyline points="893.0,291.0 895.7,266.5" fill="none" stroke="#cfa193" stroke-width="1.0" /><polyline points="893.0,291.0 900.3,265.0" fill="none" stroke="#cfa193" stroke-width="1.0" /><polyline points="893.0,291.0 905.0,263.5" fill="none" stroke="#cfa193" stroke-width="1.0" /><polyline points="898.0,293.3 914.0,268.0" fill="none" stroke="#cfa193" stroke-width="1.0" /><polyline points="903.0,295.7 923.0,272.5" fill="none" stroke="#cfa193" stroke-width="1.0" /><polyline points="908.0,298.0 932.0,277.0" fill="none" stroke="#cfa193" stroke-width="1.0" /><polyline points="912.0,299.7 942.3,283.6" fill="none" stroke="#cfa193" stroke-width="1.0" /><polyline points="916.0,301.3 952.5,290.1" fill="none" stroke="#cfa193" stroke-width="1.0" /><polyline points="920.0,303.0 962.8,296.7" fill="none" stroke="#cfa193" stroke-width="1.0" /><polyline points="922.7,304.3 964.0,300.4" fill="none" stroke="#cfa193" stroke-width="1.0" /><polyline points="925.3,305.7 965.3,304.0" fill="none" stroke="#cfa193" stroke-width="1.0" /><polyline points="928.0,307.0 966.5,307.7" fill="none" stroke="#cfa193" stroke-width="1.0" /><polyline points="930.0,309.3 958.3,310.5" fill="none" stroke="#cfa193" stroke-width="1.0" /><polyline points="932.0,311.7 950.2,313.2" fill="none" stroke="#cfa193" stroke-width="1.0" /><polyline points="934.0,314.0 942.0,316.0" fill="none" stroke="#cfa193" stroke-width="1.0" /><polyline points="892.4,284.1 893.8,283.6 895.2,283.2 896.6,282.8 902.8,285.7 909.0,288.7 915.2,291.7 921.1,294.8 927.0,298.0 932.8,301.1 935.1,303.1 937.3,305.2 939.5,307.2 938.5,309.7 937.5,312.1 936.4,314.6" fill="none" stroke="#cfa193" stroke-width="0.9" /><polyline points="891.9,278.4 894.5,277.5 897.0,276.7 899.6,275.9 906.8,279.4 914.0,282.9 921.2,286.4 928.6,290.8 936.1,295.2 943.5,299.5 945.4,302.2 947.3,304.8 949.2,307.4 945.6,310.0 942.0,312.5 938.4,315.1" fill="none" stroke="#cfa193" stroke-width="0.9" /><polyline points="891.4,272.6 895.1,271.4 898.9,270.2 902.6,269.0 910.8,273.1 919.0,277.1 927.2,281.2 936.2,286.8 945.2,292.4 954.2,298.0 955.8,301.2 957.3,304.4 958.8,307.6 952.7,310.2 946.5,312.9 940.4,315.6" fill="none" stroke="#cfa193" stroke-width="0.9" /></g>
<polygon points="728.8,315.5 740.9,302 752.3,294 765.5,291.8 795.5,286.4 822.8,282.3 860,277.5 876.8,278.2 892.8,290.5 908.8,297.9 926,304 930.9,313.9 919.8,318.8 903.9,311.4 889.1,307.7 860,307 831,312 809.1,323 795,331 781.9,333 761.5,332.5 744,327.5" fill="#cfa193" />
<polyline points="880,279.5 880,304 885,307" fill="none" stroke="#4d4545" stroke-width="1.0" />
<polyline points="887.3,274.6 888.5,299.1" fill="none" stroke="#4d4545" stroke-width="1.0" />
<polyline points="891.6,269.6 891.6,296.7 896,300" fill="none" stroke="#4d4545" stroke-width="1.0" />
<circle cx="911.5" cy="361" r="1.2" fill="#2020e0"/>
<rect x="911" y="379" width="3" height="1.5" fill="#111"/>
<text x="1006" y="671" font-family="Liberation Sans" font-size="12" fill="#34403d" textLength="142" lengthAdjust="spacingAndGlyphs">Tam ekran için çift tıklayın.</text>
</svg>
</div>

<!-- footer -->
<div id="footer"></div>
<div class="btn" style="left:1017px;border:2px solid #0078d7;line-height:19px">Tamam</div>
<div class="btn" style="left:1098px;line-height:21px">İptal</div>
</body></html>
